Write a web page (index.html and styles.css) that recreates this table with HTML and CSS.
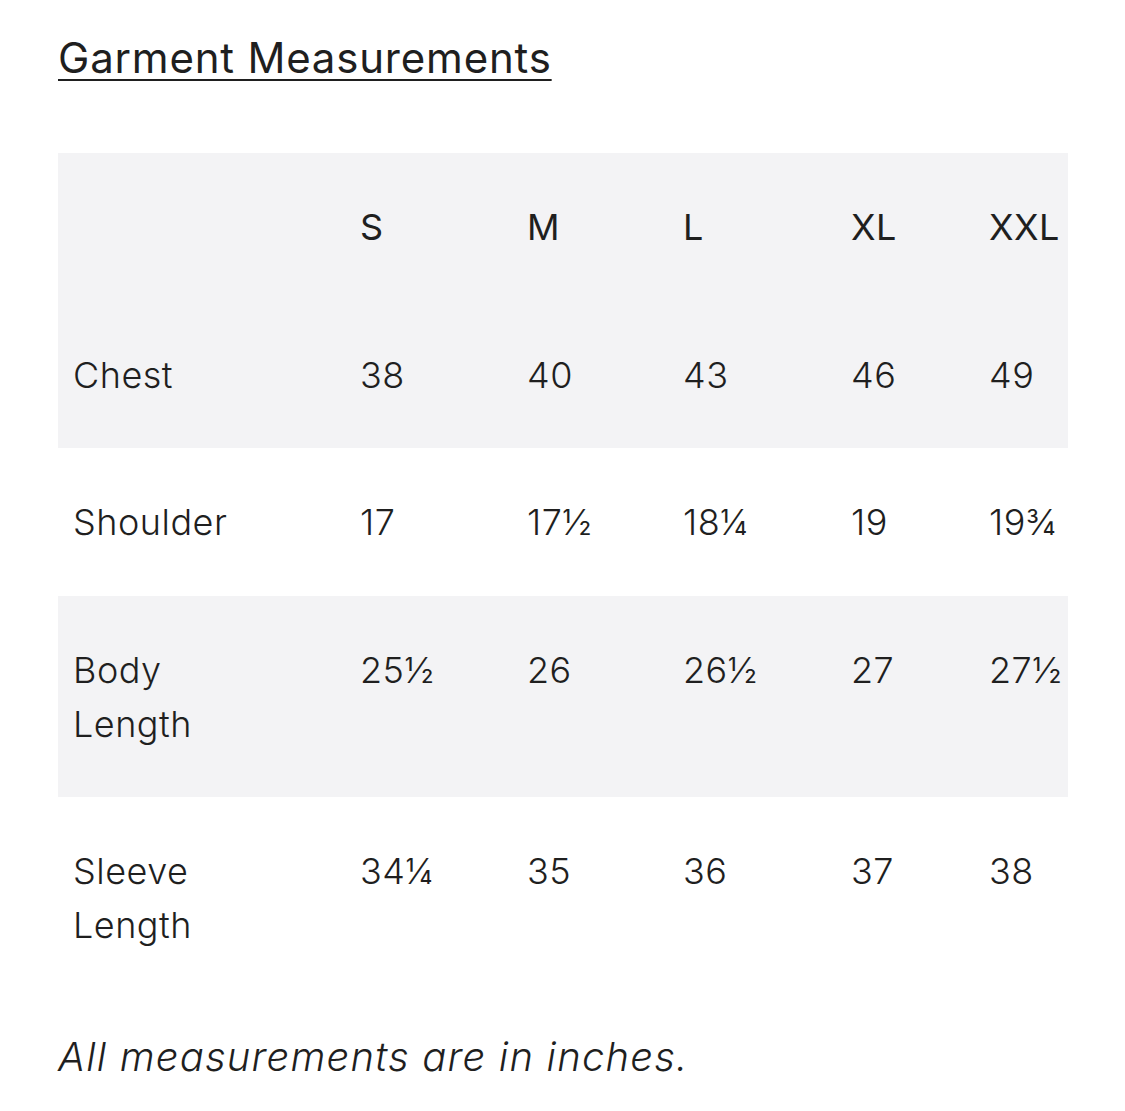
FILE: index.html
```html
<!DOCTYPE html>
<html>
<head>
<meta charset="utf-8">
<link rel="stylesheet" href="styles.css">
</head>
<body>
<main class="page">
  <h2 class="title">Garment Measurements</h2>
  <div class="table">
    <div class="row head">
      <div class="cell label"></div>
      <div class="cell">S</div>
      <div class="cell">M</div>
      <div class="cell">L</div>
      <div class="cell">XL</div>
      <div class="cell">XXL</div>
    </div>
    <div class="row shade">
      <div class="cell label">Chest</div>
      <div class="cell">38</div>
      <div class="cell">40</div>
      <div class="cell">43</div>
      <div class="cell">46</div>
      <div class="cell">49</div>
    </div>
    <div class="row">
      <div class="cell label">Shoulder</div>
      <div class="cell">17</div>
      <div class="cell">17½</div>
      <div class="cell">18¼</div>
      <div class="cell">19</div>
      <div class="cell">19¾</div>
    </div>
    <div class="row shade">
      <div class="cell label">Body<br>Length</div>
      <div class="cell">25½</div>
      <div class="cell">26</div>
      <div class="cell">26½</div>
      <div class="cell">27</div>
      <div class="cell">27½</div>
    </div>
    <div class="row">
      <div class="cell label">Sleeve<br>Length</div>
      <div class="cell">34¼</div>
      <div class="cell">35</div>
      <div class="cell">36</div>
      <div class="cell">37</div>
      <div class="cell">38</div>
    </div>
  </div>
  <p class="note">All measurements are in inches.</p>
</main>
</body>
</html>
```

FILE: styles.css
```css
html, body {
  margin: 0;
  padding: 0;
  background: #ffffff;
}
.page {
  padding: 33px 57px 0 58px;
  font-family: "Inter", "Liberation Sans", sans-serif;
  color: #1f1f1f;
}
.title {
  margin: 0;
  font-size: 42px;
  font-weight: 400;
  line-height: 50px;
  letter-spacing: 0.8px;
  text-decoration: underline;
  text-decoration-thickness: 2px;
  text-underline-offset: 6px;
  display: inline-block;
}
.table {
  margin-top: 70px;
  width: 1010px;
}
.row {
  display: grid;
  grid-template-columns: 287px 167px 156px 168px 138px 94px;
  font-size: 36px;
  font-weight: 300;
  line-height: 54px;
  letter-spacing: 0.5px;
}
.row.head,
.row.shade {
  background: #f3f3f5;
}
.row.head {
  font-weight: 400;
}
.cell {
  padding: 47px 0 46.5px 15px;
}
.note {
  margin: 31px 0 0;
  font-size: 40px;
  font-style: italic;
  font-weight: 300;
  line-height: 54px;
  letter-spacing: 1.2px;
}
```
